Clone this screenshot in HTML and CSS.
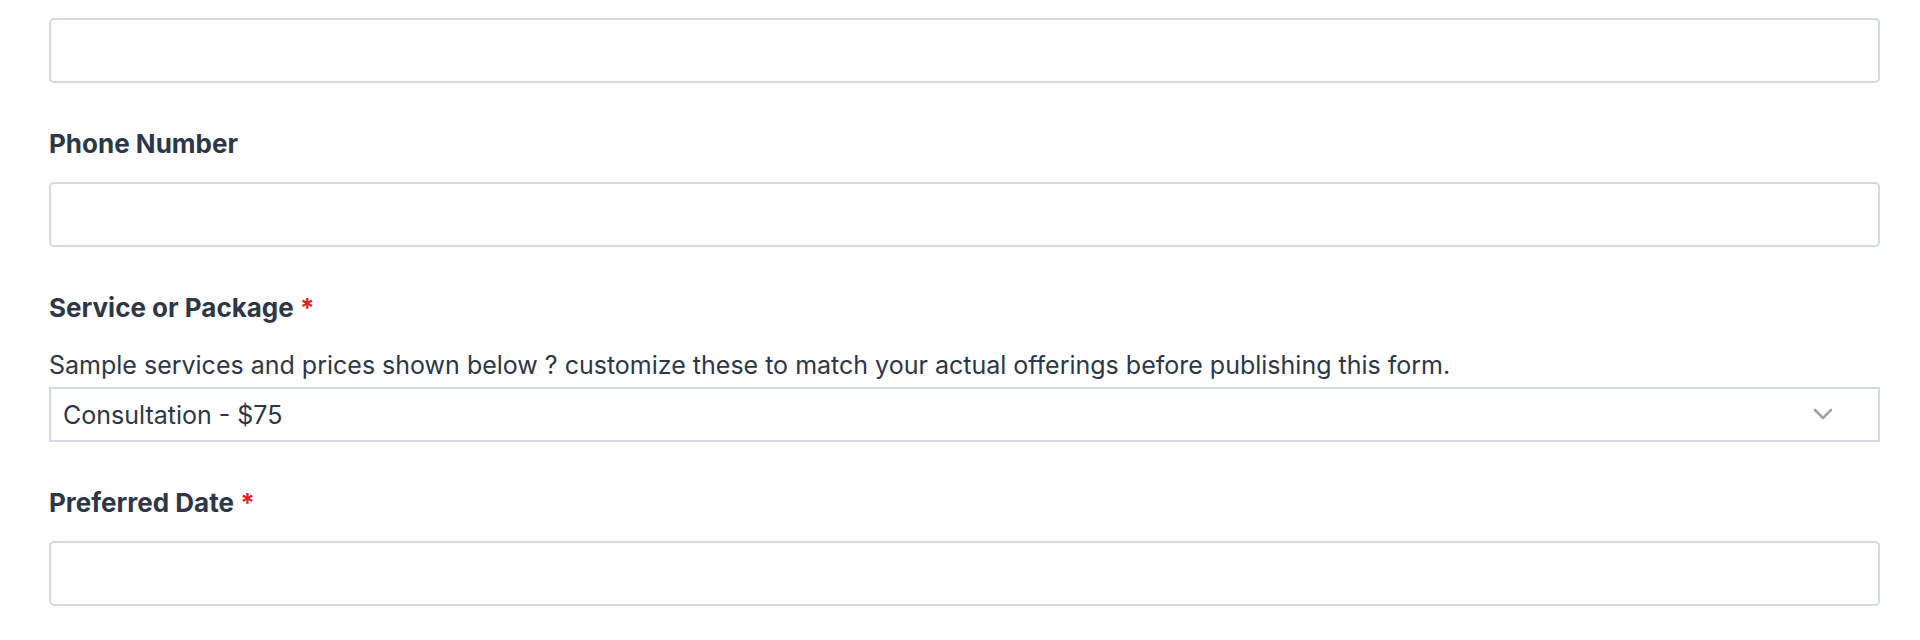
FILE: index.html
```html
<!DOCTYPE html>
<html lang="en">
<head>
<meta charset="utf-8">
<title>Booking form</title>
<link rel="stylesheet" href="styles.css">
</head>
<body>
<form class="form">
  <div class="field">
    <input class="control" type="text" aria-label="Email">
  </div>
  <div class="field">
    <label class="label">Phone Number</label>
    <input class="control" type="tel">
  </div>
  <div class="field">
    <label class="label">Service or Package <span class="req">*</span></label>
    <p class="help">Sample services and prices shown below ? customize these to match your actual offerings before publishing this form.</p>
    <div class="select-wrap">
      <select class="select">
        <option>Consultation - $75</option>
      </select>
      <svg class="chevron" width="20" height="12" viewBox="0 0 20 12"><path d="M2 2 L10 10 L18 2" fill="none" stroke="#a3a3a3" stroke-width="2.6" stroke-linecap="round" stroke-linejoin="round"/></svg>
    </div>
  </div>
  <div class="field">
    <label class="label">Preferred Date <span class="req">*</span></label>
    <input class="control" type="text">
  </div>
</form>
</body>
</html>
```
FILE: styles.css
```css
html, body {
  margin: 0;
  background: #fefefe;
}
body {
  font-family: Inter, "Liberation Sans", sans-serif;
  color: #2d3748;
}
.form {
  padding: 18px 40px 0 49px;
  display: flex;
  flex-direction: column;
  gap: 45px;
}
.field {
  display: flex;
  flex-direction: column;
}
.label {
  font-size: 26px;
  line-height: 32px;
  font-weight: 700;
  margin-bottom: 22px;
}
.req {
  color: #e02424;
}
.help {
  margin: 3px 0 6px;
  font-size: 25px;
  line-height: 32px;
}
.control {
  box-sizing: border-box;
  height: 65px;
  width: 100%;
  border: 2px solid #d2dae5;
  border-radius: 5px;
  background: #fff;
  margin: 0;
  font: inherit;
}
.select-wrap {
  position: relative;
}
.select {
  box-sizing: border-box;
  appearance: none;
  -webkit-appearance: none;
  width: 100%;
  height: 55px;
  border: 2px solid #d2dae5;
  border-radius: 0;
  background: #fff;
  margin: 0;
  padding: 0 12px;
  font-family: inherit;
  font-size: 25px;
  color: #2d3748;
}
.chevron {
  position: absolute;
  right: 47px;
  top: 21px;
}
```
